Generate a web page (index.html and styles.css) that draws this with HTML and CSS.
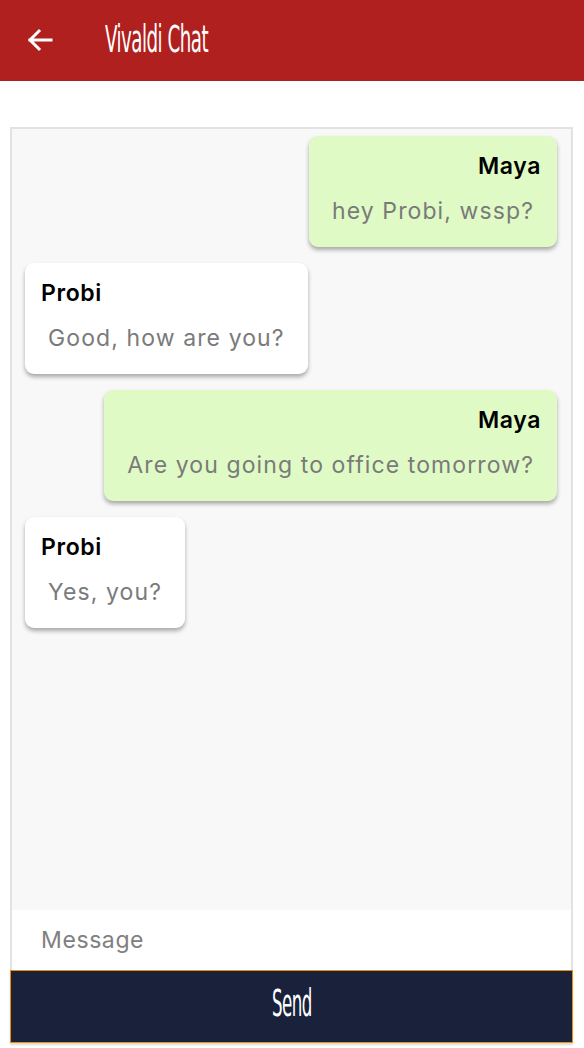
FILE: index.html
```html
<!DOCTYPE html>
<html>
<head>
<meta charset="utf-8">
<link rel="stylesheet" href="styles.css">
</head>
<body>
<header class="topbar">
  <svg class="back" width="26" height="24" viewBox="0 0 26 24"><path d="M24 12H3M12 3L3 12l9 9" fill="none" stroke="#fff" stroke-width="3" stroke-linecap="square"/></svg>
  <h1 class="title">Vivaldi Chat</h1>
</header>
<main class="panel">
  <div class="messages">
    <div class="bubble mine"><div class="name">Maya</div><div class="text">hey Probi, wssp?</div></div>
    <div class="bubble theirs"><div class="name">Probi</div><div class="text">Good, how are you?</div></div>
    <div class="bubble mine"><div class="name">Maya</div><div class="text">Are you going to office tomorrow?</div></div>
    <div class="bubble theirs"><div class="name">Probi</div><div class="text">Yes, you?</div></div>
  </div>
  <input class="msg" type="text" placeholder="Message">
  <button class="send"><span class="send-label">Send</span></button>
</main>
</body>
</html>
```
FILE: styles.css
```css
* { box-sizing: border-box; }
html, body { margin: 0; padding: 0; background: #fff; }
body { width: 584px; height: 1048px; overflow: hidden; font-family: "Inter", "Open Sans", sans-serif; }
.topbar {
  height: 81px; background: #b0201e; display: flex; align-items: center; padding-left: 27px;
}
.back { display: block; margin-top: -2px; }
.title {
  margin: -3px 0 0 52px; color: #fff; font-family: "DejaVu Sans Condensed", "Liberation Sans Narrow", sans-serif;
  font-weight: normal; font-size: 37px; letter-spacing: -1px; transform: scaleX(0.55); transform-origin: left center;
  white-space: nowrap;
}
.panel {
  margin: 46px 11px 0 10px; height: 916px; border: 2px solid #e2e2e2; border-bottom: none; background: #f8f8f8;
  display: flex; flex-direction: column;
}
.messages { flex: 1; display: flex; flex-direction: column; gap: 16px; padding: 7px 14px 0 13px; }
.bubble {
  border-radius: 9px; padding: 12px 16px 18px; box-shadow: 0 3px 4px rgba(0,0,0,0.32); max-width: 480px;
}
.mine { align-self: flex-end; background: #dffac5; text-align: right; }
.theirs { align-self: flex-start; background: #fff; text-align: left; }
.name { font-size: 23px; font-weight: 600; color: #000; line-height: 36px; margin-bottom: 9px; letter-spacing: 0.6px; }
.text { font-size: 23px; color: #7a7a7a; line-height: 36px; padding: 0 7px; letter-spacing: 1.1px; }
.msg {
  height: 60px; border: none; background: #fff; padding: 0 29px; font-family: inherit; font-size: 23px; letter-spacing: 0.6px; color: #333; outline: none; width: 100%;
}
.msg::placeholder { color: #808080; }
.send {
  height: 73px; margin: 0 -2px; width: calc(100% + 4px); background: #19223a; border: 1px solid #e8900e; color: #fff;
  font-family: "DejaVu Sans Condensed", sans-serif; font-size: 37px; box-shadow: 0 2px 2px rgba(0,0,0,0.15);
  padding: 0; display: flex; justify-content: center; align-items: center;
}
.send-label { display: inline-block; transform: scaleX(0.5); margin-top: -6px; letter-spacing: -1px; }
```
